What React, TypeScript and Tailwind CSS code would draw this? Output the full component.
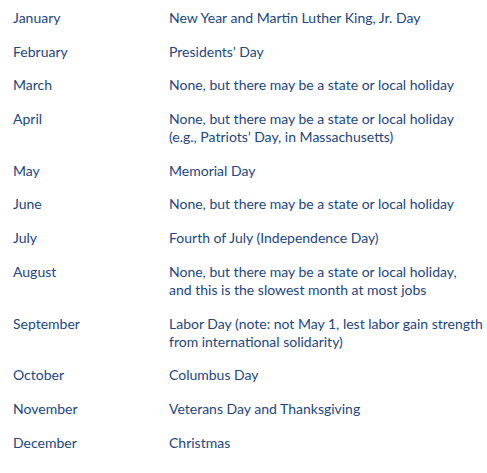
const holidays = [
  { month: "January", note: ["New Year and Martin Luther King, Jr. Day"] },
  { month: "February", note: ["Presidents’ Day"] },
  { month: "March", note: ["None, but there may be a state or local holiday"] },
  {
    month: "April",
    note: ["None, but there may be a state or local holiday", "(e.g., Patriots’ Day, in Massachusetts)"],
  },
  { month: "May", note: ["Memorial Day"] },
  { month: "June", note: ["None, but there may be a state or local holiday"] },
  { month: "July", note: ["Fourth of July (Independence Day)"] },
  {
    month: "August",
    note: ["None, but there may be a state or local holiday,", "and this is the slowest month at most jobs"],
  },
  {
    month: "September",
    note: ["Labor Day (note: not May 1, lest labor gain strength", "from international solidarity)"],
  },
  { month: "October", note: ["Columbus Day"] },
  { month: "November", note: ["Veterans Day and Thanksgiving"] },
  { month: "December", note: ["Christmas"] },
];

export default function App() {
  return (
    <div className="w-[487px] h-[473px] bg-white pt-[1px] font-['Lato',sans-serif] text-[14px] leading-[18px] text-[#22467f]">
      {holidays.map((h) => (
        <div key={h.month} className="flex pt-[8px] pb-[7.7px] pl-[13px]">
          <div className="w-[156px] shrink-0">{h.month}</div>
          <div>
            {h.note.map((line) => (
              <div key={line}>{line}</div>
            ))}
          </div>
        </div>
      ))}
    </div>
  );
}
